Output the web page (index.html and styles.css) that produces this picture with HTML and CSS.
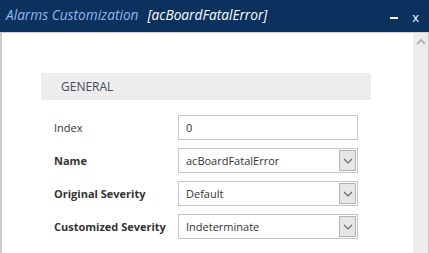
FILE: index.html
```html
<html>
<head>
  <title>Alarms Customization</title>
  <link rel="stylesheet" href="styles.css">
</head>
<body>
  <div class="dialog">
    <div class="titlebar">
      <span class="title">Alarms Customization</span>
      <span class="subtitle">[acBoardFatalError]</span>
      <span class="spacer"></span>
      <span class="btn-min"></span>
      <span class="btn-close">x</span>
    </div>

    <div class="frame">
      <div class="content">
        <div class="section">
          <div class="section-head">GENERAL</div>

          <div class="row">
            <label class="lbl">Index</label>
            <div class="field"><span class="val">0</span></div>
          </div>
          <div class="row">
            <label class="lbl bold">Name</label>
            <div class="field select"><span class="val">acBoardFatalError</span><span class="arrow"><svg width="10" height="6" viewBox="0 0 10 6"><path d="M1 1 L5 5 L9 1" fill="none" stroke="#666" stroke-width="1.1"/></svg></span></div>
          </div>
          <div class="row">
            <label class="lbl bold">Original Severity</label>
            <div class="field select"><span class="val">Default</span><span class="arrow"><svg width="10" height="6" viewBox="0 0 10 6"><path d="M1 1 L5 5 L9 1" fill="none" stroke="#666" stroke-width="1.1"/></svg></span></div>
          </div>
          <div class="row">
            <label class="lbl bold">Customized Severity</label>
            <div class="field select"><span class="val">Indeterminate</span><span class="arrow"><svg width="10" height="6" viewBox="0 0 10 6"><path d="M1 1 L5 5 L9 1" fill="none" stroke="#666" stroke-width="1.1"/></svg></span></div>
          </div>
        </div>
      </div>
      <div class="scrollbar">
        <svg width="10" height="7" viewBox="0 0 10 7"><path d="M1 6 L5 2 L9 6" fill="none" stroke="#b5b5b5" stroke-width="2"/></svg>
      </div>
    </div>
  </div>
</body>
</html>
```

FILE: styles.css
```css
body {
  margin: 0;
  font-family: "Open Sans", Arial, sans-serif;
  background-color: #ffffff;
}

.dialog {
  width: 429px;
  height: 253px;
  display: flex;
  flex-direction: column;
  overflow: hidden;
}

.titlebar {
  height: 32px;
  background-color: #0b315e;
  display: flex;
  align-items: center;
  padding: 0 10px 0 6px;
  box-sizing: border-box;
  font-style: italic;
  font-size: 13.7px;
  flex-shrink: 0;
}

.title {
  color: #8fb8ea;
  margin-top: -4px;
}

.subtitle {
  color: #ffffff;
  margin-left: 9px;
  margin-top: -4px;
}

.spacer {
  flex: 1;
}

.btn-min {
  width: 8px;
  height: 2px;
  background-color: #ffffff;
  margin-top: 4px;
  margin-right: 14px;
}

.btn-close {
  color: #ffffff;
  font-style: normal;
  font-size: 13px;
  margin-top: 1px;
}

.frame {
  flex: 1;
  display: flex;
  border-top: 1px solid #d0d0d0;
  border-left: 2px solid #c9cdd2;
}

.content {
  flex: 1;
  background-color: #ffffff;
}

.scrollbar {
  width: 15px;
  background-color: #ededed;
  border-right: 1px solid #c6c6c6;
  display: flex;
  justify-content: center;
  padding-top: 5px;
  box-sizing: content-box;
}

.section {
  margin: 40px 0 0 39px;
  width: 330px;
}

.section-head {
  height: 27px;
  background-color: #ededed;
  color: #444c55;
  font-size: 12px;
  line-height: 27px;
  padding-left: 20px;
  margin-bottom: 15px;
}

.row {
  display: flex;
  align-items: center;
  height: 25px;
  margin-bottom: 8px;
}

.lbl {
  width: 124px;
  padding-left: 13px;
  font-size: 11px;
  color: #333333;
}

.bold {
  font-weight: bold;
}

.field {
  width: 180px;
  height: 25px;
  box-sizing: border-box;
  border: 1px solid #c3c6cc;
  display: flex;
  align-items: center;
  padding: 1px;
}

.val {
  flex: 1;
  font-size: 11px;
  color: #333333;
  padding-left: 6px;
}

.arrow {
  width: 17px;
  height: 21px;
  box-sizing: border-box;
  background-color: #e6e6e6;
  border: 1px solid #b4b4b4;
  display: flex;
  align-items: center;
  justify-content: center;
}
```
